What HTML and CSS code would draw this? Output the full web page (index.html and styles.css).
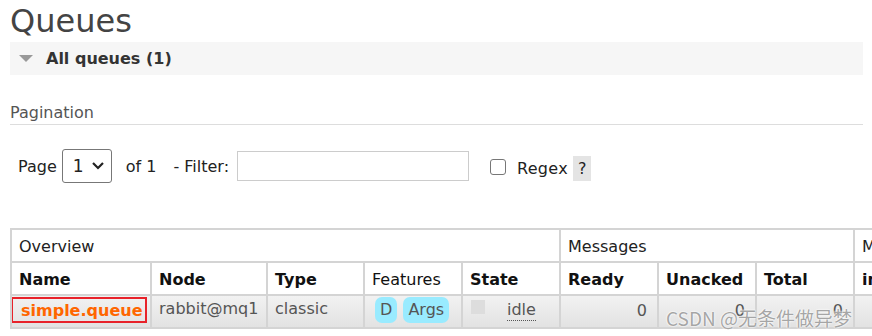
FILE: index.html
```html
<!DOCTYPE html>
<html lang="en">

<head>
    <meta charset="UTF-8">
    <title>Queues</title>
    <link rel="stylesheet" href="styles.css">
</head>

<body>
    <div class="main">
        <h1>Queues</h1>

        <!-- All queues section -->
        <div class="section">
            <div class="section-head">
                <span class="arrow"></span>
                <h2>All queues (1)</h2>
            </div>

            <div class="section-body">
                <h3>Pagination</h3>
                <div class="pager">
                    <label>Page</label>
                    <div class="select">
                        <span>1</span>
                        <svg width="14" height="10" viewBox="0 0 14 10"><path d="M2 2 L7 7 L12 2" fill="none" stroke="#222" stroke-width="2.2"/></svg>
                    </div>
                    <span class="of">of 1</span>
                    <label>- Filter:</label>
                    <input type="text" class="filter">
                    <span class="check"></span>
                    <label class="regex">Regex</label>
                    <span class="help">?</span>
                </div>

                <div class="table-wrap">
                    <table class="list">
                        <colgroup>
                            <col class="w-name">
                            <col class="w-node">
                            <col class="w-type">
                            <col class="w-col">
                            <col class="w-col">
                            <col class="w-col">
                            <col class="w-col">
                            <col class="w-col">
                            <col class="w-rate">
                        </colgroup>
                        <tr class="group">
                            <th colspan="5">Overview</th>
                            <th colspan="3">Messages</th>
                            <th>Message rates</th>
                        </tr>
                        <tr class="cols">
                            <th>Name</th>
                            <th>Node</th>
                            <th>Type</th>
                            <th class="plain">Features</th>
                            <th>State</th>
                            <th>Ready</th>
                            <th>Unacked</th>
                            <th>Total</th>
                            <th>incoming</th>
                        </tr>
                        <tr class="row">
                            <td><a class="queue-link" href="#">simple.queue</a></td>
                            <td>rabbit@mq1</td>
                            <td>classic</td>
                            <td><span class="badge">D</span> <span class="badge">Args</span></td>
                            <td><span class="state-box"></span><abbr class="state">idle</abbr></td>
                            <td class="num">0</td>
                            <td class="num">0</td>
                            <td class="num">0</td>
                            <td></td>
                        </tr>
                    </table>
                </div>
            </div>
        </div>
    </div>

    <div class="watermark">CSDN @无条件做异梦</div>
</body>

</html>
```

FILE: styles.css
```css
body {
    margin: 0;
    padding: 0;
    font-family: 'DejaVu Sans', Verdana, sans-serif;
    font-size: 16px;
    color: #484848;
    background: #fff;
    overflow: hidden;
}

.main {
    padding: 0 9px 0 10px;
}

h1 {
    margin: 0;
    padding-top: 2px;
    font-size: 32px;
    font-weight: normal;
    line-height: 38px;
    color: #444;
}

.section-head {
    display: flex;
    align-items: center;
    height: 33px;
    margin-top: 2px;
    padding-left: 9px;
    background-color: #f6f6f6;
}

.arrow {
    width: 0;
    height: 0;
    border-left: 7px solid transparent;
    border-right: 7px solid transparent;
    border-top: 7px solid #999;
    margin-right: 13px;
}

.section-head h2 {
    margin: 0;
    font-size: 16px;
    font-weight: bold;
    color: #333;
}

.section-body h3 {
    margin: 28px 0 0;
    padding-bottom: 1px;
    font-size: 16px;
    font-weight: normal;
    line-height: 20px;
    color: #555;
    border-bottom: 1px solid #ddd;
}

.pager {
    display: flex;
    align-items: center;
    margin-top: 24px;
    padding-left: 8px;
    color: #222;
}

.select {
    display: flex;
    align-items: center;
    justify-content: space-between;
    box-sizing: border-box;
    width: 50px;
    height: 34px;
    margin-left: 5px;
    padding: 0 6px 0 10px;
    border: 1px solid #777;
    border-radius: 3px;
    font-size: 17px;
}

.of {
    margin: 0 17px 0 14px;
}

.filter {
    box-sizing: border-box;
    width: 232px;
    height: 30px;
    margin-left: 8px;
    border: 1px solid #ccc;
}

.check {
    box-sizing: border-box;
    width: 16px;
    height: 16px;
    margin: 2px 11px 0 21px;
    border: 1px solid #777;
    border-radius: 3px;
}

.regex {
    padding-top: 4px;
    letter-spacing: 0.3px;
}

.help {
    margin-left: 5px;
    margin-top: 4px;
    padding: 1px 5px;
    background-color: #e4e4e4;
    line-height: 23px;
}

.table-wrap {
    margin-top: 45px;
    width: 1000px;
}

.list {
    table-layout: fixed;
    width: 963px;
    border-collapse: collapse;
    border: 2px solid #d4d4d4;
    white-space: nowrap;
}

.w-name { width: 140px; }
.w-node { width: 116px; }
.w-type { width: 97px; }
.w-col { width: 98px; }
.w-rate { width: 120px; }

.list th,
.list td {
    border: 2px solid #d4d4d4;
    padding: 0 7px;
    text-align: left;
    overflow: hidden;
}

.list tr {
    height: 33px;
}

.list .group th {
    font-weight: normal;
    color: #222;
    padding-top: 1px;
}

.list .cols th {
    font-weight: bold;
    color: #111;
    padding-top: 1px;
}

.list .cols th.plain {
    font-weight: normal;
}

.row td {
    background: linear-gradient(#f2f2f2, #e2e2e2);
    color: #555;
    vertical-align: top;
    padding-top: 3px;
}

.row td.num {
    text-align: right;
    padding-right: 10px;
    padding-top: 5px;
}

.queue-link {
    display: inline-block;
    margin: -2px 0 0 -8px;
    padding: 1px 3px 0 8px;
    border: 2px solid #e8222a;
    color: #ff6600;
    font-weight: bold;
    text-decoration: none;
    line-height: 21px;
}

.badge {
    display: inline-block;
    margin: -2px 0 0 3px;
    padding: 2px 5px;
    background-color: #99ebff;
    border-radius: 7px;
    line-height: 22px;
}

.badge + .badge {
    margin-left: 1px;
}

.state-box {
    display: inline-block;
    width: 14px;
    height: 14px;
    margin: 1px 22px 0 1px;
    vertical-align: top;
    background-color: #ddd;
}

.state {
    display: inline-block;
    margin-top: 1px;
    text-decoration: none;
    border-bottom: 1px dotted #555;
    line-height: 20px;
}

.watermark {
    position: absolute;
    left: 666px;
    top: 304px;
    font-family: 'Noto Sans CJK SC', sans-serif;
    font-size: 19px;
    color: rgba(150, 150, 150, 0.85);
    text-shadow: 0 0 2px #fff, 0 0 2px #fff;
}
```
